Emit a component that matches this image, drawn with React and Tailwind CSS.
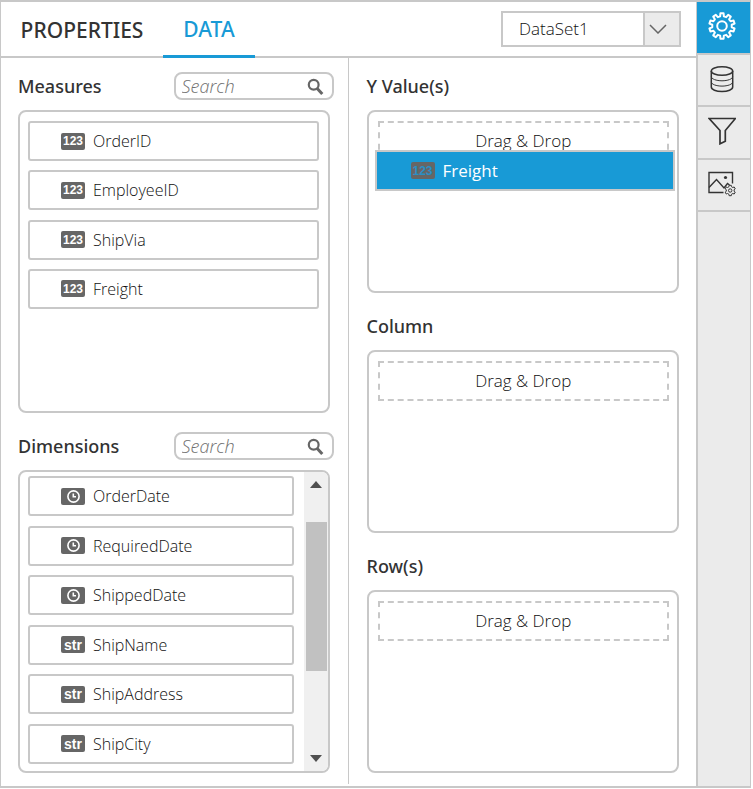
const gearPath = (cx, cy, teeth, outer, inner) => {
  const step = (Math.PI * 2) / teeth;
  const pts = [];
  for (let i = 0; i < teeth; i += 1) {
    const a = i * step - Math.PI / 2;
    [[-0.3, inner], [-0.2, outer], [0.2, outer], [0.3, inner]].forEach(([k, r]) => {
      pts.push(`${(cx + r * Math.cos(a + k * step)).toFixed(2)} ${(cy + r * Math.sin(a + k * step)).toFixed(2)}`);
    });
  }
  return `M${pts.join("L")}Z`;
};

const GearIcon = () => (
  <svg className="size-7" viewBox="0 0 28 28" fill="none" stroke="currentColor" strokeWidth="2" strokeLinejoin="round" aria-hidden="true">
    <path d={gearPath(14, 14, 10, 12.8, 9.8)} />
    <circle cx="14" cy="14" r="4.8" />
  </svg>
);

const DatabaseIcon = () => (
  <svg className="size-7" viewBox="0 0 28 28" fill="none" stroke="currentColor" strokeWidth="1.5" aria-hidden="true">
    <ellipse cx="14" cy="6" rx="10.700" ry="4.3" />
    <path d="M3.300 6V22C3.300 24.500 8 26.500 14 26.500s10.700-2 10.700-4.500V6" />
    <path d="M3.300 11.500c0 2.500 5 4.300 10.700 4.300s10.700-1.800 10.700-4.300M3.300 16.800c0 2.500 5 4.300 10.700 4.300s10.700-1.800 10.700-4.300" strokeWidth="1" />
  </svg>
);

const FilterIcon = () => (
  <svg className="size-7" viewBox="0 0 28 28" fill="none" stroke="currentColor" strokeWidth="1.7" aria-hidden="true">
    <path d="M1.200 1.500h26.200L17.300 13.500v10.800L12 26.800V13.500z" />
  </svg>
);

const ImageSettingsIcon = () => (
  <svg className="size-7" viewBox="0 0 28 28" fill="none" stroke="currentColor" strokeWidth="1.400" aria-hidden="true">
    <path d="M15.500 22.500H1V2.500h23.500V13.500" />
    <path d="M1 17.500L8.500 9.500l7.500 8.500 3.500-4.500 2 1.500" />
    <circle cx="17.500" cy="7.500" r="1.600" fill="currentColor" stroke="none" />
    <path d={gearPath(22.2, 20.5, 6, 5.3, 4)} strokeWidth="1" strokeLinejoin="round" />
    <circle cx="22.2" cy="20.5" r="1.700" strokeWidth="1" />
  </svg>
);

const SearchIcon = () => (
  <svg className="size-[17px] shrink-0 text-[#666]" viewBox="0 0 17 17" fill="none" stroke="currentColor" aria-hidden="true">
    <circle cx="6.700" cy="6.700" r="4.900" strokeWidth="2.200" />
    <path d="M10.200 10.500L15.300 16" strokeWidth="3" />
  </svg>
);

const TypeBadge = ({ type, muted }) => (
  <span
    className={`flex h-[17px] w-6 shrink-0 items-center justify-center rounded-[2px] bg-[#666] font-['Liberation_Sans',Arial,sans-serif] leading-4 font-bold ${muted ? "text-[#2b8fc4]" : "text-white"} ${type === "str" ? "text-sm" : "text-xs"}`}
  >
    {type === "date" ? (
      <svg className="size-[13px]" viewBox="0 0 13 13" fill="none" stroke="currentColor" strokeWidth="1.600" aria-label="date">
        <circle cx="6.500" cy="6.500" r="5.600" />
        <path d="M6.300 3.500v3.300h2.700" />
      </svg>
    ) : (
      type
    )}
  </span>
);

const FieldItem = ({ type, name }) => (
  <li className="flex h-10 items-center gap-2 rounded-[3px] border-2 border-[#c8c8c8] pl-[31px]">
    <TypeBadge type={type} />
    <span className="text-base leading-6 font-light text-[#111]">{name}</span>
  </li>
);

const FieldHeader = ({ title, id }) => (
  <div className="mr-[14px] mb-[10px] flex h-7 items-center justify-between">
    <h2 className="font-['Noto_Sans','Open_Sans',sans-serif] text-lg leading-7 font-medium">{title}</h2>
    <div className="flex h-7 w-40 items-center rounded-lg border-2 border-[#c8c8c8] pr-2 pl-[6px]">
      <input
        id={id}
        type="text"
        placeholder="Search"
        aria-label={`Search ${title}`}
        className="min-w-0 flex-1 bg-transparent text-lg leading-6 font-light italic outline-none placeholder:text-[#6f6f6f]"
      />
      <SearchIcon />
    </div>
  </div>
);

const DropSection = ({ title, children }) => (
  <section>
    <h2 className="mb-[10px] font-['Noto_Sans','Open_Sans',sans-serif] text-lg leading-7 font-medium">{title}</h2>
    <div className="relative h-[183px] rounded-lg border-2 border-[#c8c8c8] pt-[9px] pr-2 pl-[9px]">
      <div className="flex h-10 items-center justify-center border-2 border-dashed border-[#c8c8c8] text-[17px] leading-6 font-light text-[#111]">
        Drag &amp; Drop
      </div>
      {children}
    </div>
  </section>
);

const measures = ["OrderID", "EmployeeID", "ShipVia", "Freight"];
const dimensions = [
  ["date", "OrderDate"],
  ["date", "RequiredDate"],
  ["date", "ShippedDate"],
  ["str", "ShipName"],
  ["str", "ShipAddress"],
  ["str", "ShipCity"],
];
const tools = [
  ["Data source", DatabaseIcon],
  ["Filter", FilterIcon],
  ["Image settings", ImageSettingsIcon],
];

export default function App() {
  return (
    <div className="bg-white pr-[2px] pb-px font-['Open_Sans','Noto_Sans',sans-serif] text-[#333]">
      <div className="flex border-x border-y-2 border-[#c8c8c8]">
        <main className="min-w-0 flex-1">
          <header className="flex h-14 justify-between border-b-2 border-[#c8c8c8] pr-[15px]">
            <nav className="flex h-14 font-['Noto_Sans','Open_Sans',sans-serif] text-[21px] leading-7 font-medium">
              <button type="button" className="w-[162px]">PROPERTIES</button>
              <button type="button" className="w-[92px] border-b-[3px] border-[#189ad6] text-[#189ad6]">DATA</button>
            </nav>
            <div className="mt-[9px] grid h-9 w-[180px] border-2 border-[#c8c8c8]">
              <select aria-label="Data set" className="col-start-1 row-start-1 appearance-none bg-white pl-4 text-[17px] leading-6 font-light text-[#111] outline-none">
                <option>DataSet1</option>
              </select>
              <span className="pointer-events-none col-start-1 row-start-1 flex w-9 items-center justify-center justify-self-end border-l-2 border-[#c8c8c8] bg-[#ebebeb] pr-2">
                <svg className="h-[10px] w-[18px]" viewBox="0 0 18 10" fill="none" stroke="#666" strokeWidth="1.500" aria-hidden="true">
                  <path d="M1 1l8 8 8-8" />
                </svg>
              </span>
            </div>
          </header>
          <div className="grid grid-cols-2">
            <div className="mb-[2px] flex flex-col gap-[19px] border-r border-[#c8c8c8] pt-[14px] pb-[11px] pl-[17px]">
              <section>
                <FieldHeader title="Measures" id="search-measures" />
                <div className="mr-[18px] h-[303px] rounded-lg border-2 border-[#c8c8c8] pt-[9px] pr-[9px] pl-2">
                  <ul className="flex h-[188px] flex-col justify-between">
                    {measures.map((name) => (
                      <FieldItem key={name} type="123" name={name} />
                    ))}
                  </ul>
                </div>
              </section>
              <section>
                <FieldHeader title="Dimensions" id="search-dimensions" />
                <div className="mr-[18px] flex h-[303px] justify-between overflow-hidden rounded-lg border-2 border-[#c8c8c8] pl-2">
                  <ul className="mt-1 mr-[10px] flex h-[288px] flex-1 flex-col justify-between">
                    {dimensions.map(([type, name]) => (
                      <FieldItem key={name} type={type} name={name} />
                    ))}
                  </ul>
                  <div className="flex w-6 flex-col items-center bg-[#f0f0f0] pt-[9px] pb-[9px] pl-px">
                    <svg className="h-[7px] w-3" viewBox="0 0 12 7" fill="#505050" aria-hidden="true"><path d="M0 7l6-7 6 7z" /></svg>
                    <div className="mt-[34px] h-[149px] w-[21px] bg-[#c1c1c1]" />
                    <svg className="mt-auto h-[7px] w-3" viewBox="0 0 12 7" fill="#505050" aria-hidden="true"><path d="M0 0l6 7 6-7z" /></svg>
                  </div>
                </div>
              </section>
            </div>
            <div className="flex flex-col gap-[19px] pt-[14px] pr-[17px] pb-[13px] pl-[18px]">
              <DropSection title="Y Value(s)">
                <div className="absolute top-[38px] right-[2px] left-[6px] flex h-[41px] items-center gap-2 border-2 border-[#c8c8c8] bg-[#189ad6] pl-[34px] text-white">
                  <TypeBadge type="123" muted />
                  <span className="text-[17px] leading-6">Freight</span>
                </div>
              </DropSection>
              <DropSection title="Column" />
              <DropSection title="Row(s)" />
            </div>
          </div>
        </main>
        <aside className="w-[54px] border-l-2 border-[#c8c8c8] bg-[#ebebeb]">
          <div className="grid h-[210px] grid-rows-4">
            <button type="button" aria-label="Settings" className="-ml-px flex items-center justify-center border-b-2 border-[#c8c8c8] bg-[#189ad6] pr-[3px] pb-[2px] text-white">
              <GearIcon />
            </button>
            {tools.map(([label, Icon]) => (
              <button key={label} type="button" aria-label={label} className="flex items-center justify-center border-b-2 border-[#c8c8c8] pr-1 pb-[2px]">
                <Icon />
              </button>
            ))}
          </div>
        </aside>
      </div>
    </div>
  );
}
